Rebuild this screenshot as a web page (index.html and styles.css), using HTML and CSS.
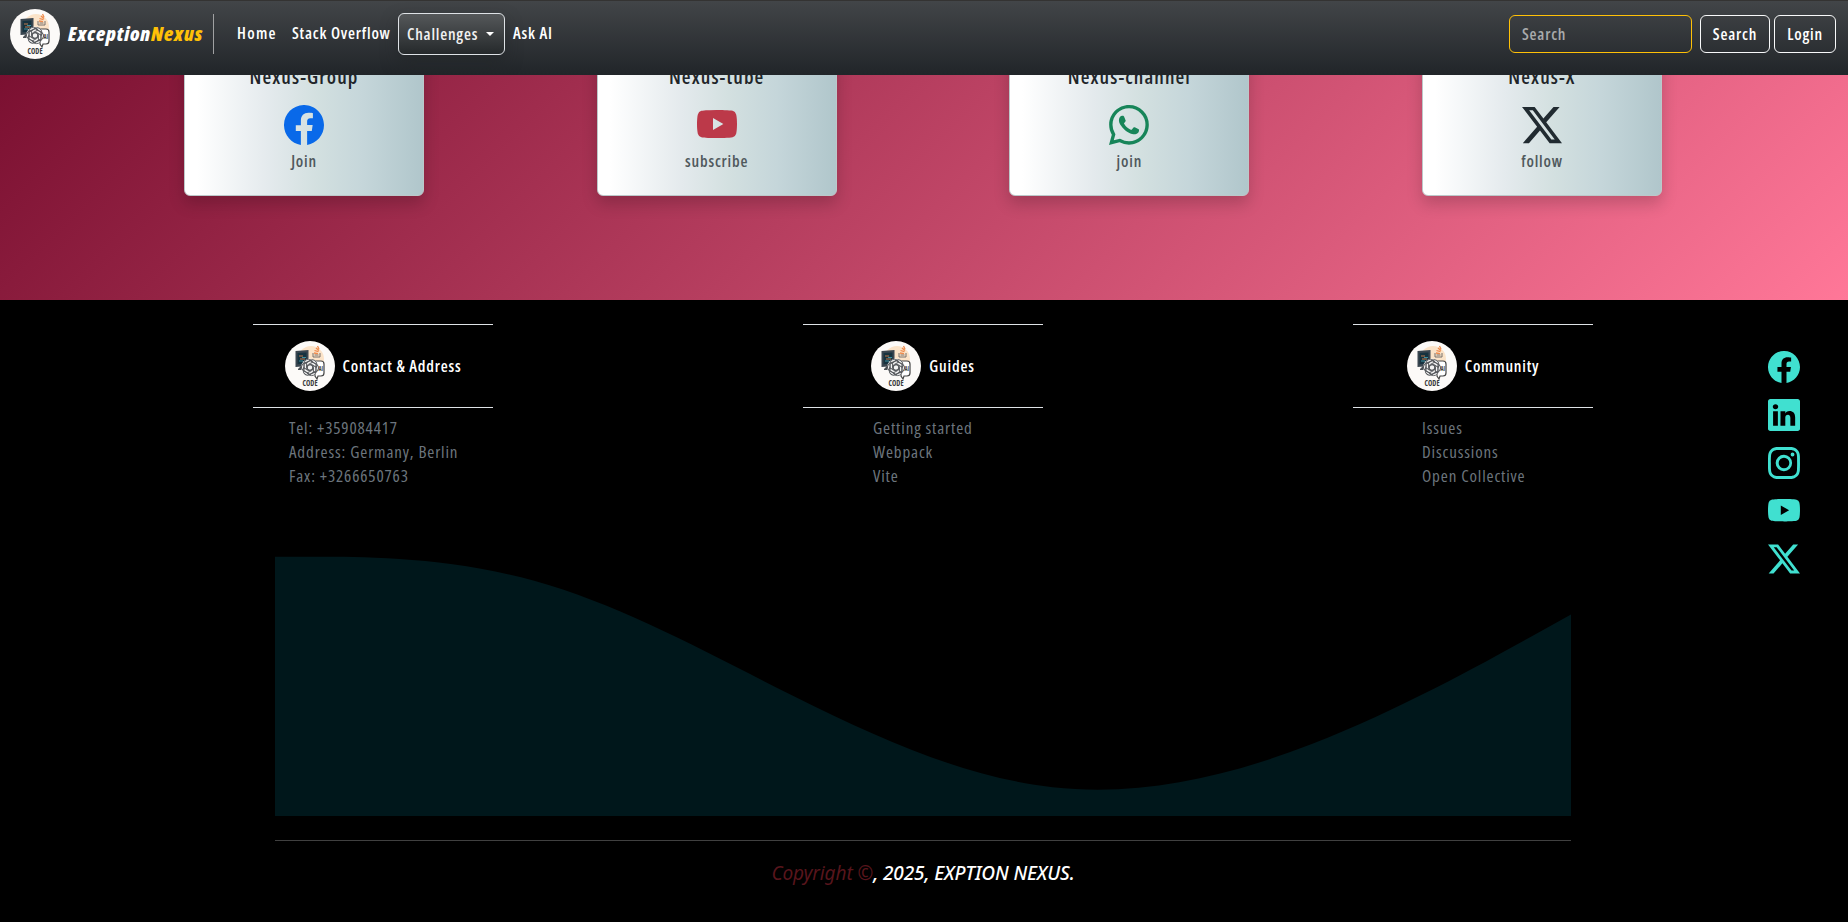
FILE: index.html
```html
<!DOCTYPE html>
<html lang="en">
<head>
<meta charset="utf-8">
<title>ExceptionNexus</title>
<link rel="stylesheet" href="styles.css">
</head>
<body>
<svg class="defs" width="0" height="0">
  <symbol id="facebook" viewBox="0 0 16 16"><path d="M16 8.049c0-4.446-3.582-8.05-8-8.05C3.58 0-.002 3.603-.002 8.05c0 4.017 2.926 7.347 6.75 7.951v-5.625h-2.03V8.05H6.75V6.275c0-2.017 1.195-3.131 3.022-3.131.876 0 1.791.157 1.791.157v1.98h-1.009c-.993 0-1.303.621-1.303 1.258v1.51h2.218l-.354 2.326H9.25V16c3.824-.604 6.75-3.934 6.75-7.951"/></symbol>
  <symbol id="youtube" viewBox="0 0 16 16"><path d="M8.051 1.999h.089c.822.003 4.987.033 6.11.335a2.01 2.01 0 0 1 1.415 1.42c.101.38.172.883.22 1.402l.01.104.022.26.008.104c.065.914.073 1.77.074 1.957v.075c-.001.194-.01 1.108-.082 2.06l-.008.105-.009.104c-.05.572-.124 1.14-.235 1.558a2.01 2.01 0 0 1-1.415 1.42c-1.16.312-5.569.334-6.18.335h-.142c-.309 0-1.587-.006-2.927-.052l-.17-.006-.087-.004-.171-.007-.171-.007c-1.11-.049-2.167-.128-2.654-.26a2.01 2.01 0 0 1-1.415-1.419c-.111-.417-.185-.986-.235-1.558L.09 9.82l-.008-.104A31 31 0 0 1 0 7.68v-.123c.002-.215.01-.958.064-1.778l.007-.103.003-.052.008-.104.022-.26.01-.104c.048-.519.119-1.023.22-1.402a2.01 2.01 0 0 1 1.415-1.42c.487-.13 1.544-.21 2.654-.26l.17-.007.172-.006.086-.003.171-.007A100 100 0 0 1 7.858 2zM6.4 5.209v4.818l4.157-2.408z"/></symbol>
  <symbol id="whatsapp" viewBox="0 0 16 16"><path d="M13.601 2.326A7.85 7.85 0 0 0 7.994 0C3.627 0 .068 3.558.064 7.926c0 1.399.366 2.76 1.057 3.965L0 16l4.204-1.102a7.9 7.9 0 0 0 3.79.965h.004c4.368 0 7.926-3.558 7.93-7.93A7.9 7.9 0 0 0 13.6 2.326zM7.994 14.521a6.6 6.6 0 0 1-3.356-.92l-.24-.144-2.494.654.666-2.433-.156-.251a6.56 6.56 0 0 1-1.007-3.505c0-3.626 2.957-6.584 6.591-6.584a6.56 6.56 0 0 1 4.66 1.931 6.56 6.56 0 0 1 1.928 4.66c-.004 3.639-2.961 6.592-6.592 6.592m3.615-4.934c-.197-.099-1.17-.578-1.353-.646-.182-.065-.315-.099-.445.099-.133.197-.513.646-.627.775-.114.133-.232.148-.43.05-.197-.1-.836-.308-1.592-.985-.59-.525-.985-1.175-1.103-1.372-.114-.198-.011-.304.088-.403.087-.088.197-.232.296-.346.1-.114.133-.198.198-.33.065-.134.034-.248-.015-.347-.05-.099-.445-1.076-.612-1.47-.16-.389-.323-.335-.445-.34-.114-.007-.247-.007-.38-.007a.73.73 0 0 0-.529.247c-.182.198-.691.677-.691 1.654s.71 1.916.81 2.049c.098.133 1.394 2.132 3.383 2.992.47.205.84.326 1.129.418.475.152.904.129 1.246.08.38-.058 1.171-.48 1.338-.943.164-.464.164-.86.114-.943-.049-.084-.182-.133-.38-.232"/></symbol>
  <symbol id="x" viewBox="0 0 16 16"><path d="M12.6.75h2.454l-5.36 6.142L16 15.25h-4.937l-3.867-5.07-4.425 5.07H.316l5.733-6.57L0 .75h5.063l3.495 4.633L12.601.75Zm-.86 13.028h1.36L4.323 2.145H2.865z"/></symbol>
  <symbol id="linkedin" viewBox="0 0 16 16"><path d="M0 1.146C0 .513.526 0 1.175 0h13.65C15.474 0 16 .513 16 1.146v13.708c0 .633-.526 1.146-1.175 1.146H1.175C.526 16 0 15.487 0 14.854zm4.943 12.248V6.169H2.542v7.225zm-1.2-8.212c.837 0 1.358-.554 1.358-1.248-.015-.709-.52-1.248-1.342-1.248S2.4 3.226 2.4 3.934c0 .694.521 1.248 1.327 1.248zm4.908 8.212V9.359c0-.216.016-.432.08-.586.173-.431.568-.878 1.232-.878.869 0 1.216.662 1.216 1.634v3.865h2.401V9.25c0-2.22-1.184-3.252-2.764-3.252-1.274 0-1.845.7-2.165 1.193v.025h-.016l.016-.025V6.169h-2.4c.03.678 0 7.225 0 7.225z"/></symbol>
  <symbol id="instagram" viewBox="0 0 16 16"><path d="M8 0C5.829 0 5.556.01 4.703.048 3.85.088 3.269.222 2.76.42a3.9 3.9 0 0 0-1.417.923A3.9 3.9 0 0 0 .42 2.76C.222 3.268.087 3.85.048 4.7.01 5.555 0 5.827 0 8.001c0 2.172.01 2.444.048 3.297.04.852.174 1.433.372 1.942.205.526.478.972.923 1.417.444.445.89.719 1.416.923.51.198 1.09.333 1.942.372C5.555 15.99 5.827 16 8 16s2.444-.01 3.298-.048c.851-.04 1.434-.174 1.943-.372a3.9 3.9 0 0 0 1.416-.923c.445-.445.718-.891.923-1.417.197-.509.332-1.09.372-1.942C15.99 10.445 16 10.173 16 8s-.01-2.445-.048-3.299c-.04-.851-.175-1.433-.372-1.941a3.9 3.9 0 0 0-.923-1.417A3.9 3.9 0 0 0 13.24.42c-.51-.198-1.092-.333-1.943-.372C10.443.01 10.172 0 7.998 0zm-.717 1.442h.718c2.136 0 2.389.007 3.232.046.78.035 1.204.166 1.486.275.373.145.64.319.92.599s.453.546.598.92c.11.281.24.705.275 1.485.039.843.047 1.096.047 3.231s-.008 2.389-.047 3.232c-.035.78-.166 1.203-.275 1.485a2.5 2.5 0 0 1-.599.919c-.28.28-.546.453-.92.598-.28.11-.704.24-1.485.276-.843.038-1.096.047-3.232.047s-2.39-.009-3.233-.047c-.78-.036-1.203-.166-1.485-.276a2.5 2.5 0 0 1-.92-.598 2.5 2.5 0 0 1-.6-.92c-.109-.281-.24-.705-.275-1.485-.038-.843-.046-1.096-.046-3.233s.008-2.388.046-3.231c.036-.78.166-1.204.276-1.486.145-.373.319-.64.599-.92s.546-.453.92-.598c.282-.11.705-.24 1.485-.276.738-.034 1.024-.044 2.515-.045zm4.988 1.328a.96.96 0 1 0 0 1.920.96.96 0 0 0 0-1.920m-4.270 1.122a4.109 4.109 0 1 0 0 8.217 4.109 4.109 0 0 0 0-8.217m0 1.441a2.667 2.667 0 1 1 0 5.334 2.667 2.667 0 0 1 0-5.334"/></symbol>
  <symbol id="logo" viewBox="0 0 50 50">
    <circle cx="25" cy="25" r="25" fill="#fcfaf8"/>
    <circle cx="26" cy="18" r="13" fill="#fbe3c8"/>
    <path d="M10.500 10l13-1v16l-13 1z" fill="#3a4650"/><path d="M12.500 12l9-.6v11.200l-9 .6z" fill="#16323f"/>
    <path d="M14 15h4M15 18h5" stroke="#c07a4c"/><path d="M17 16.500h4M14 20h4" stroke="#3b8fa0"/>
    <path d="M13 28l3-3h3l2 4h-8z" fill="#4b5157"/>
    <path d="M28 12v4h7v-4M29.500 14h4" fill="none" stroke="#77716d"/>
    <path d="M29 12l4 .6M29.500 9.500l4 1.200M31 7l3 2.500M32.500 5l1.500 3" stroke="#ef8a4c" stroke-width="1.300"/>
    <path d="M31 20h5q3 0 3 3v9q0 3-3 3h-3l-1 3-2-3z" fill="#fff" stroke="#444" stroke-width="1.200"/>
    <g fill="none" stroke="#53565a" stroke-width=".9"><circle cx="25" cy="26.500" r="9" fill="#f3f3f3" stroke="none"/>
      <path id="petal" d="M23.500 32.500l-4.500-2.600v-6.500q0-5 4.500-5 3 0 4.500 2.500l-5.500 3v5"/>
      <use href="#petal" transform="rotate(60 25 26.500)"/><use href="#petal" transform="rotate(120 25 26.500)"/><use href="#petal" transform="rotate(180 25 26.500)"/><use href="#petal" transform="rotate(240 25 26.500)"/><use href="#petal" transform="rotate(300 25 26.500)"/></g>
    <text x="33.500" y="30" font-size="7" letter-spacing="0" textLength="4.500" lengthAdjust="spacingAndGlyphs" font-weight="700" fill="#444">AI</text>
    <text x="17.500" y="45" font-size="9.500" letter-spacing="0" textLength="15" lengthAdjust="spacingAndGlyphs" font-weight="700" fill="#3b3b3b">CODE</text>
  </symbol>
</svg>

<nav class="navbar">
  <svg class="logo"><use href="#logo"/></svg>
  <a class="brand">Exception<span>Nexus</span></a>
  <i class="divider"></i>
  <div class="links"><a>Home</a><a>Stack Overflow</a><a class="dropdown">Challenges</a><a>Ask AI</a></div>
  <form class="search"><input placeholder="Search"><button type="button">Search</button><button type="button" class="login">Login</button></form>
</nav>

<main class="social-cards">
  <article class="card"><h5>Nexus-Group</h5><svg class="blue"><use href="#facebook"/></svg><p>Join</p></article>
  <article class="card"><h5>Nexus-tube</h5><svg class="red"><use href="#youtube"/></svg><p>subscribe</p></article>
  <article class="card"><h5>Nexus-channel</h5><svg class="green"><use href="#whatsapp"/></svg><p>join</p></article>
  <article class="card"><h5>Nexus-X</h5><svg class="dark"><use href="#x"/></svg><p>follow</p></article>
</main>

<footer>
  <div class="columns">
    <section><h6><svg class="logo"><use href="#logo"/></svg>Contact &amp; Address</h6>
      <ul class="contact"><li>Tel: +359084417</li><li>Address: Germany, Berlin</li><li>Fax: +3266650763</li></ul></section>
    <section><h6><svg class="logo"><use href="#logo"/></svg>Guides</h6>
      <ul class="guides"><li>Getting started</li><li>Webpack</li><li>Vite</li></ul></section>
    <section><h6><svg class="logo"><use href="#logo"/></svg>Community</h6>
      <ul class="community"><li>Issues</li><li>Discussions</li><li>Open Collective</li></ul></section>
    <div class="socials"><svg><use href="#facebook"/></svg><svg><use href="#linkedin"/></svg><svg><use href="#instagram"/></svg><svg><use href="#youtube"/></svg><svg><use href="#x"/></svg></div>
  </div>
  <svg class="wave" viewBox="0 0 1440 320"><path d="M0,32L48,32C96,32,192,32,288,58.700C384,85.300,480,138.700,576,186.700C672,234.700,768,277.300,864,288C960,298.700,1056,277.300,1152,240C1248,202.700,1344,149.300,1392,122.700L1440,96V320H0Z"/></svg>
  <p class="copyright"><span>Copyright ©</span>, 2025, EXPTION NEXUS.</p>
</footer>
</body>
</html>
```
FILE: styles.css
```css
* { box-sizing: border-box; }
body { margin: 0; height: 922px; overflow: hidden; background: #000; font: 600 16px/24px "Open Sans", "Noto Sans", sans-serif; font-stretch: 75%; letter-spacing: .8px; display: flex; flex-direction: column; }
.defs { position: absolute; }
h5, h6, p, ul { margin: 0; padding: 0; list-style: none; }
svg { fill: currentColor; }
.logo { width: 50px; height: 50px; flex: none; }
.navbar { flex: none; height: 75px; padding: 0 12px 8px 10px; display: flex; align-items: center; color: #fff; border-top: 1px solid #343332; background: linear-gradient(#424548, #212529); }
.brand { width: 135px; margin-left: 8px; font-size: 20px; font-weight: 800; font-style: italic; white-space: nowrap; }
.brand span { color: #ffc107; }
.divider { width: 1px; height: 40px; margin-left: 10px; background: #a0a1a2; }
.links { display: flex; align-items: center; margin: -2px 0 0 23px; white-space: nowrap; }
.links a { width: 39px; margin-right: 16px; }
.links a:first-child { letter-spacing: 1.3px; }
.links a:nth-child(2) { width: 98px; }
.links .dropdown { display: flex; align-items: center; width: 107px; height: 42px; margin: 2px 8px 0 -8px; padding-left: 8px; border: 1px solid #dee2e6; border-radius: 6px; color: #f1f1f1; background: linear-gradient(#55585a, #25292b); box-shadow: 0 8px 16px rgba(32,36,37,.5); }
.dropdown::after { content: ""; margin-left: 8px; border: 4px solid transparent; border-top-color: #fff; border-bottom: 0; }
.search { display: flex; margin-left: auto; }
.search input, .search button { height: 38px; border: 1px solid #f8f9fa; border-radius: 6px; background: transparent; color: #fff; font: inherit; letter-spacing: inherit; padding: 0 12px; }
.search input { width: 183px; margin-right: 8px; border-color: #ffc107; }
.search input::placeholder { color: #a9abac; opacity: 1; }
.search button { width: 70px; margin-right: 4px; padding: 0; }
.search .login { width: 62px; margin: 0; }
.social-cards { flex: none; height: 225px; padding: 0 186px 0 184px; display: flex; justify-content: space-between; overflow: hidden; background: linear-gradient(135deg, #7b1031, #ff7798); }
.card { width: 240px; height: 143px; margin-top: -22px; display: flex; flex-direction: column; align-items: center; color: #212529; border: 1px solid #bcc8c9; border-radius: 6px; background: linear-gradient(90deg, #fff 5%, #e4eaed 35%, #d3e0e0 55%, #c5d6da 75%, #b0c6cb); box-shadow: 0 8px 16px rgba(0,0,0,.18); }
.card h5 { margin: 11px 0 16px; font-size: 20px; font-weight: 600; line-height: 24px; letter-spacing: 1.1px; white-space: nowrap; }
.card svg { flex: none; width: 40px; height: 40px; }
.card p { margin-top: 4px; color: #50595d; }
.blue { color: #0969e9; } .red { color: #bc3949; } .green { color: #178559; } .dark { color: #212b31; }
footer { flex: 1; display: flex; flex-direction: column; align-items: center; padding-right: 2px; }
.columns { align-self: flex-start; margin-left: 253px; height: 228px; padding-top: 24px; display: flex; }
.columns section { width: 240px; margin-right: 310px; flex: none; }
.columns section:nth-child(3) { margin-right: 175px; }
h6 { height: 84px; border-top: 1px solid #dee2e6; border-bottom: 1px solid #dee2e6; display: flex; align-items: center; justify-content: center; gap: 8px; color: #fff; font-size: 16px; font-weight: 600; white-space: nowrap; }
ul { margin-top: 8px; color: #6c757d; font-size: 17px; font-weight: 400; letter-spacing: .85px; white-space: nowrap; }
.contact { margin-left: 36px; } .guides { margin-left: 70px; } .community { margin-left: 69px; }
.socials { display: flex; flex-direction: column; gap: 16px; padding-top: 27px; color: #40e0d0; }
.socials svg { width: 32px; height: 32px; flex: none; }
.wave { width: 1296px; height: 288px; color: #00171b; }
.copyright { width: 1296px; margin-top: 24px; padding-top: 17px; border-top: 1px solid #404040; text-align: center; color: #fff; font: italic 500 19px/30px "Noto Sans", sans-serif; letter-spacing: -.1px; }
.copyright span { color: #58151c; font-weight: 400; }
```
